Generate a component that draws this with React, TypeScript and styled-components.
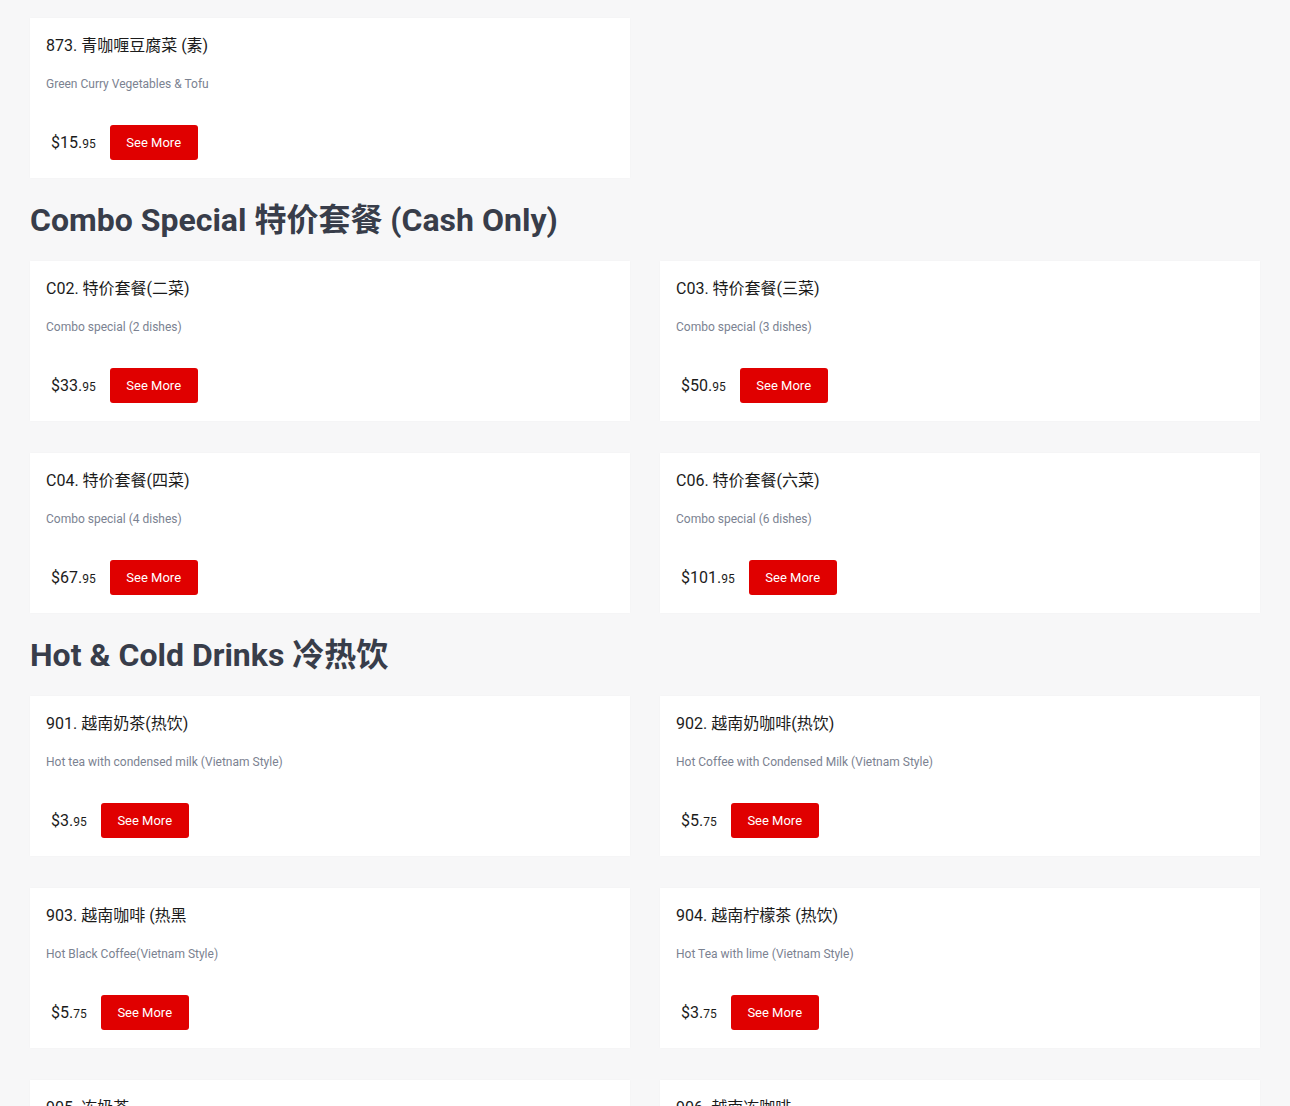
import React from "react";
import styled, { createGlobalStyle } from "styled-components";

const GlobalStyle = createGlobalStyle`
  html, body {
    margin: 0;
    padding: 0;
    background: #f7f7f8;
    font-family: Roboto, "Noto Sans CJK SC", sans-serif;
  }
`;

const Page = styled.div`
  padding: 18px 30px 0 30px;
  display: flex;
  flex-direction: column;
`;

const Heading = styled.h2`
  margin: 22px 0 21px 0;
  font-size: 32px;
  line-height: 40px;
  font-weight: 700;
  color: #383d4a;
  font-family: Roboto, "Noto Sans CJK SC", sans-serif;
`;

const Grid = styled.div`
  display: grid;
  grid-template-columns: 600px 600px;
  column-gap: 30px;
  row-gap: 32px;
`;

const Card = styled.div`
  background: #ffffff;
  height: 160px;
  box-sizing: border-box;
  padding: 17px 16px 18px 16px;
  display: flex;
  flex-direction: column;
  box-shadow: 0 0 2px rgba(0, 0, 0, 0.03);
`;

const Title = styled.div`
  font-size: 16px;
  line-height: 22px;
  color: #1b1b1b;
`;

const Desc = styled.div`
  margin-top: 20px;
  font-size: 12px;
  line-height: 14px;
  color: #7b8291;
`;

const PriceRow = styled.div`
  margin-top: auto;
  display: flex;
  align-items: center;
  height: 35px;
`;

const Price = styled.div`
  margin-left: 5px;
  margin-right: 14px;
  font-size: 16px;
  color: #1b1b1b;
  display: flex;
  align-items: baseline;
`;

const Cents = styled.span`
  font-size: 12px;
`;

const Button = styled.button`
  width: 88px;
  height: 35px;
  border: none;
  border-radius: 3px;
  background: #e00000;
  color: #ffffff;
  font-family: Roboto, sans-serif;
  font-size: 13px;
  padding: 0;
  cursor: pointer;
`;

type Item = { title: string; desc: string; price: string };

const Dish = ({ item }: { item: Item }) => {
  const [whole, cents] = item.price.split(".");
  return (
    <Card>
      <Title>{item.title}</Title>
      <Desc>{item.desc}</Desc>
      <PriceRow>
        <Price>
          ${whole}.<Cents>{cents}</Cents>
        </Price>
        <Button>See More</Button>
      </PriceRow>
    </Card>
  );
};

const first: Item[] = [
  { title: "873. 青咖喱豆腐菜 (素)", desc: "Green Curry Vegetables & Tofu", price: "15.95" },
];

const combo: Item[] = [
  { title: "C02. 特价套餐(二菜)", desc: "Combo special (2 dishes)", price: "33.95" },
  { title: "C03. 特价套餐(三菜)", desc: "Combo special (3 dishes)", price: "50.95" },
  { title: "C04. 特价套餐(四菜)", desc: "Combo special (4 dishes)", price: "67.95" },
  { title: "C06. 特价套餐(六菜)", desc: "Combo special (6 dishes)", price: "101.95" },
];

const drinks: Item[] = [
  { title: "901. 越南奶茶(热饮)", desc: "Hot tea with condensed milk (Vietnam Style)", price: "3.95" },
  { title: "902. 越南奶咖啡(热饮)", desc: "Hot Coffee with Condensed Milk (Vietnam Style)", price: "5.75" },
  { title: "903. 越南咖啡 (热黑", desc: "Hot Black Coffee(Vietnam Style)", price: "5.75" },
  { title: "904. 越南柠檬茶 (热饮)", desc: "Hot Tea with lime (Vietnam Style)", price: "3.75" },
  { title: "905. 冻奶茶", desc: "Iced tea with condensed milk (Vietnam Style)", price: "3.95" },
  { title: "906. 越南冻咖啡", desc: "Iced Coffee with Condensed Milk (Vietnam Style)", price: "5.75" },
];

export default function App() {
  return (
    <>
      <GlobalStyle />
      <Page>
        <Grid>
          {first.map((it) => (
            <Dish key={it.title} item={it} />
          ))}
        </Grid>
        <Heading>Combo Special 特价套餐 (Cash Only)</Heading>
        <Grid>
          {combo.map((it) => (
            <Dish key={it.title} item={it} />
          ))}
        </Grid>
        <Heading>Hot &amp; Cold Drinks 冷热饮</Heading>
        <Grid>
          {drinks.map((it) => (
            <Dish key={it.title} item={it} />
          ))}
        </Grid>
      </Page>
    </>
  );
}
